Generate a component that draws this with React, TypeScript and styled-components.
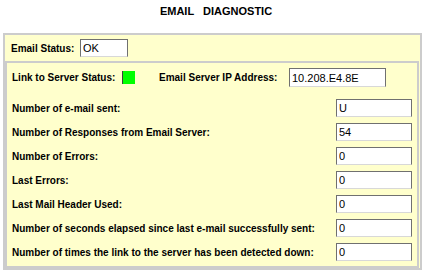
import React from 'react';
import styled, {createGlobalStyle} from 'styled-components';

const GlobalStyle = createGlobalStyle`
  body {
    margin: 0;
    background: #ffffff;
    font-family: "Liberation Sans", Arial, sans-serif;
    color: #000000;
  }
`;

const rows = [
  {label: 'Number of e-mail sent:', value: 'U'},
  {label: 'Number of Responses from Email Server:', value: '54'},
  {label: 'Number of Errors:', value: '0'},
  {label: 'Last Errors:', value: '0'},
  {label: 'Last Mail Header Used:', value: '0'},
  {label: 'Number of seconds elapsed since last e-mail successfully sent:', value: '0'},
  {label: 'Number of times the link to the server has been detected down:', value: '0'},
];

const App = () => {
  return (
    <Page>
      <GlobalStyle />
      <Title>{'EMAIL   DIAGNOSTIC'}</Title>
      <Frame>
        <StatusRow>
          <Label $width={66}>Email Status:</Label>
          <Field readOnly value={'OK'} $width={48} />
        </StatusRow>
        <Inner>
          <LinkRow>
            <Label $width={110}>Link to Server Status:</Label>
            <Led />
            <Label $width={130} $indent={24}>Email Server IP Address:</Label>
            <Field readOnly value={'10.208.E4.8E'} $width={97} $height={19} />
          </LinkRow>
          <Rows>
            {rows.map((r) => (
              <Row key={r.label}>
                <Label>{r.label}</Label>
                <Field readOnly value={r.value} $width={76} />
              </Row>
            ))}
          </Rows>
        </Inner>
      </Frame>
    </Page>
  );
};

const Page = styled.div`
  width: 419px;
  margin-left: 3px;
`;

const Title = styled.div`
  height: 33px;
  box-sizing: border-box;
  padding: 5px 0 0 7px;
  text-align: center;
  font-size: 11px;
  font-weight: bold;
  white-space: pre;
`;

const Frame = styled.div`
  height: 237px;
  box-sizing: border-box;
  border: 2px solid #cccccc;
  background: #ffffcc;
  display: flex;
  flex-direction: column;
`;

const StatusRow = styled.div`
  height: 26px;
  display: flex;
  align-items: center;
  gap: 3px;
  padding-left: 6px;
`;

const Inner = styled.div`
  flex: 1;
  margin-right: 1px;
  border: 2px solid #cccccc;
  padding: 5px 5px 0 5px;
`;

const LinkRow = styled.div`
  height: 19px;
  display: flex;
  align-items: center;
`;

const Rows = styled.div`
  margin-top: 12px;
  display: flex;
  flex-direction: column;
  gap: 6px;
`;

const Row = styled.div`
  height: 18px;
  display: flex;
  align-items: center;
  justify-content: space-between;
`;

const Label = styled.span<{$width?: number; $indent?: number}>`
  font-size: 10px;
  font-weight: bold;
  white-space: nowrap;
  ${(p) => (p.$width ? `width: ${p.$width}px; flex: none;` : '')}
  ${(p) => (p.$indent ? `margin-left: ${p.$indent}px;` : '')}
`;

const Led = styled.span`
  width: 12px;
  height: 13px;
  flex: none;
  background: #00ff00;
  border-left: 1px solid #404040;
`;

const Field = styled.input<{$width: number; $height?: number}>`
  width: ${(p) => p.$width}px;
  height: ${(p) => p.$height || 18}px;
  box-sizing: border-box;
  margin: 0;
  padding: 0 2px;
  background: #ffffff;
  border: 1px solid #707070;
  border-bottom-color: #d8d8d8;
  font-family: "Liberation Sans", Arial, sans-serif;
  font-size: 11px;
  color: #000000;
  outline: none;
`;

export default App;
